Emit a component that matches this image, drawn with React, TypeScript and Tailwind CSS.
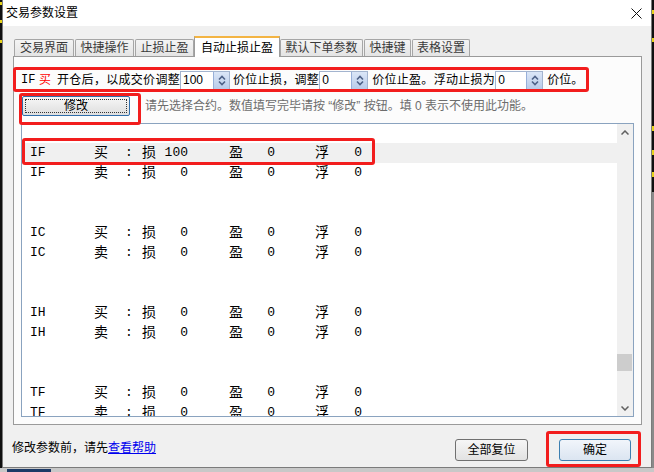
import React from "react";

const UI = "font-['Liberation_Sans','Noto_Sans_CJK_SC',sans-serif]";
const MONO = "font-['Liberation_Mono','Noto_Sans_CJK_SC',monospace]";

function Spin() {
  return (
    <div className="w-[16px] h-full border-l border-[#97afd9] bg-gradient-to-b from-[#dbe6f7] to-[#b8cbea] flex items-center justify-center">
      <svg width="8" height="11" viewBox="0 0 8 11">
        <path d="M1 4.5 L4 1.5 L7 4.5" fill="none" stroke="#4d6187" strokeWidth="1.6" />
        <path d="M1 6.5 L4 9.5 L7 6.5" fill="none" stroke="#4d6187" strokeWidth="1.6" />
      </svg>
    </div>
  );
}

function NumInput({ value, w }: { value: string; w: number }) {
  return (
    <div
      className="h-[19px] bg-white border border-[#a3b4cf] flex items-stretch"
      style={{ width: w }}
    >
      <div className="flex-1 pl-[2px] text-[12px] leading-[17px] text-black">{value}</div>
      <Spin />
    </div>
  );
}

function Tab({ label, w, ml, selected }: { label: string; w: number; ml: number; selected?: boolean }) {
  if (selected) {
    return (
      <div
        className="relative z-10 h-[21px] -mb-[1px] bg-white border border-b-0 border-[#9c9c9c] border-t-[2px] border-t-[#f3b443] flex items-center justify-center text-[12px] text-black"
        style={{ width: w, marginLeft: ml }}
      >
        {label}
      </div>
    );
  }
  return (
    <div
      className="h-[17px] bg-gradient-to-b from-[#f4f4f4] to-[#e4e4e4] border border-b-0 border-[#a6a6a6] rounded-t-[2px] flex items-center justify-center text-[12px] text-[#3a3a3a]"
      style={{ width: w, marginLeft: ml }}
    >
      {label}
    </div>
  );
}

type RowData = { code: string; side: string; loss: string; hl?: boolean } | null;

function ListRow({ r }: { r: RowData }) {
  if (!r) return <div className="h-[20px]" />;
  return (
    <div className={`h-[20px] flex items-center text-black ${r.hl ? "bg-[#f0f0f0]" : ""}`}>
      <span className="w-[72px] pl-[8px] text-[13px]">{r.code}</span>
      <span className="w-[31px] text-[14px]">{r.side}</span>
      <span className="w-[17px] text-[13px]">:</span>
      <span className="w-[14px] text-[14px] leading-none">损</span>
      <span className="w-[32px] text-right text-[13px]">{r.loss}</span>
      <span className="w-[41px]" />
      <span className="w-[14px] text-[14px] leading-none">盈</span>
      <span className="w-[32px] text-right text-[13px]">0</span>
      <span className="w-[40px]" />
      <span className="w-[14px] text-[14px] leading-none">浮</span>
      <span className="w-[33px] text-right text-[13px]">0</span>
    </div>
  );
}

export default function App() {
  const rows: RowData[] = [];
  const codes = ["IF", "IC", "IH", "TF"];
  codes.forEach((c, i) => {
    rows.push({ code: c, side: "买", loss: i === 0 ? "100" : "0", hl: i === 0 });
    rows.push({ code: c, side: "卖", loss: "0" });
    if (i < codes.length - 1) {
      rows.push(null);
      rows.push(null);
    }
  });

  return (
    <div className={`w-[654px] h-[472px] bg-[#101010] overflow-hidden relative ${UI}`}>
      {/* desktop bits */}
      <div className="absolute left-0 top-[2px] w-[2px] h-[3px] bg-[#e6d21a]" />
      <div className="absolute left-0 top-[20px] w-[2px] h-[3px] bg-[#e6d21a]" />
      <div className="absolute left-0 top-[40px] w-[2px] h-[3px] bg-[#e6d21a]" />
      <div className="absolute right-0 top-[10px] w-[2px] h-[4px] bg-[#e6d21a]" />
      <div className="absolute right-0 top-[38px] w-[2px] h-[4px] bg-[#e6d21a]" />
      <div className="absolute right-0 top-[126px] w-[2px] h-[5px] bg-[#e6d21a]" />
      <div className="absolute right-0 top-[150px] w-[2px] h-[5px] bg-[#e6d21a]" />
      <div className="absolute right-0 top-[172px] w-[2px] h-[5px] bg-[#e6d21a]" />
      <div className="absolute right-0 top-[192px] w-[2px] h-[280px] bg-[#8a8a8a]" />
      <div className="absolute left-0 top-[468px] w-[654px] h-[4px] bg-[#c8c8c8]" />
      <div className="absolute left-[7px] top-[469px] w-[44px] h-[3px] bg-[#1d3a66]" />

      {/* dialog window */}
      <div className="absolute left-[2px] top-0 w-[650px] h-[468px] bg-[#f0f0f0] border-x border-b border-[#7b7b7b] flex flex-col">
        {/* title bar */}
        <div className="h-[26px] bg-white flex items-center pl-[3px] pr-[9px] shrink-0">
          <span className="text-[12px] text-black leading-none">交易参数设置</span>
          <svg className="ml-auto" width="11" height="11" viewBox="0 0 11 11">
            <path d="M0.5 0.5 L10.5 10.5 M10.5 0.5 L0.5 10.5" stroke="#111" strokeWidth="1" />
          </svg>
        </div>

        {/* tabs */}
        <div className="pt-[10px] pl-[11px] h-[30px] flex items-end shrink-0">
          <Tab label="交易界面" w={60} ml={0} />
          <Tab label="快捷操作" w={59} ml={1} />
          <Tab label="止损止盈" w={59} ml={1} />
          <Tab label="自动止损止盈" w={86} ml={0} selected />
          <Tab label="默认下单参数" w={83} ml={0} />
          <Tab label="快捷键" w={47} ml={1} />
          <Tab label="表格设置" w={58} ml={1} />
        </div>

        {/* panel */}
        <div className="relative ml-[10px] w-[629px] h-[369px] bg-[#fcfcfc] border border-[#9a9a9a] pt-[13px] px-[7px] shrink-0">
          {/* row 1 */}
          <div className="h-[20px] flex items-center text-[12px] text-black whitespace-nowrap">
            <span className={`w-[18px] ${MONO} text-[12px]`}>IF</span>
            <span className="w-[18px] text-[#ff0000]">买</span>
            <span className="tracking-[0.3px]">开仓后，以成交价调整</span>
            <div className="ml-[0px]"><NumInput value="100" w={50} /></div>
            <span className="ml-[3px] tracking-[0.3px]">价位止损，调整</span>
            <div className="ml-[0px]"><NumInput value="0" w={49} /></div>
            <span className="ml-[4px] tracking-[0.3px]">价位止盈。浮动止损为</span>
            <div className="ml-[0px]"><NumInput value="0" w={48} /></div>
            <span className="ml-[4px]">价位。</span>
          </div>

          {/* row 2 */}
          <div className="mt-[6px] h-[20px] flex items-center whitespace-nowrap">
            <button className="ml-[1px] w-[108px] h-[20px] rounded-[2px] border border-[#2f6eab] bg-gradient-to-b from-[#f7f7f7] to-[#dedede] p-[2px] text-[12px] text-black">
              <div className="w-full h-full border border-dotted border-[#333] flex items-center justify-center leading-none">
                修改
              </div>
            </button>
            <span className="ml-[15px] text-[12px] text-[#6d6d6d]">
              请先选择合约。数值填写完毕请按 “修改” 按钮。填 0 表示不使用此功能。
            </span>
          </div>

          {/* list */}
          <div className={`mt-[7px] h-[294px] bg-white border border-[#8aa3bf] flex overflow-hidden ${MONO}`}>
            <div className="flex-1 pt-[19px] overflow-hidden">
              {rows.map((r, i) => (
                <ListRow key={i} r={r} />
              ))}
            </div>
            <div className="w-[16px] bg-[#f0f0f0] relative">
              <svg className="absolute left-[4px] top-[6px]" width="8" height="5" viewBox="0 0 8 5">
                <path d="M0.5 4.5 L4 1 L7.5 4.5" fill="none" stroke="#606060" strokeWidth="1.5" />
              </svg>
              <div className="absolute left-0 top-[230px] w-[15px] h-[17px] bg-[#cdcdcd]" />
              <svg className="absolute left-[4px] top-[282px]" width="8" height="5" viewBox="0 0 8 5">
                <path d="M0.5 0.5 L4 4 L7.5 0.5" fill="none" stroke="#606060" strokeWidth="1.5" />
              </svg>
            </div>
          </div>

          {/* annotations */}
          <div className="absolute left-[-1px] top-[10px] w-[576px] h-[25px] border-[3px] border-[#f21d1d] rounded-[3px]" />
          <div className="absolute left-[5px] top-[36px] w-[122px] h-[32px] border-[3px] border-[#f21d1d] rounded-[3px]" />
          <div className="absolute left-[8px] top-[81px] w-[353px] h-[27px] border-[3px] border-[#f21d1d] rounded-[3px]" />
        </div>

        {/* footer */}
        <div className="relative flex-1 flex items-start pt-[14px] pl-[9px] pr-[20px]">
          <span className="mt-[2px] text-[12px] leading-[14px] text-black whitespace-nowrap">
            修改参数前，请先<span className="text-[#0000ee] underline">查看帮助</span>
          </span>
          <button className="ml-auto w-[73px] h-[22px] rounded-[3px] border border-[#707070] bg-gradient-to-b from-[#f6f6f6] to-[#e2e2e2] text-[12px] text-black">
            全部复位
          </button>
          <button className="ml-[31px] w-[72px] h-[22px] rounded-[3px] border border-[#3c7fb1] bg-gradient-to-b from-[#f1f5fb] to-[#dbe5f1] text-[12px] text-black">
            确定
          </button>
          <div className="absolute left-[543px] top-[6px] w-[95px] h-[36px] border-[3px] border-[#f21d1d] rounded-[3px]" />
        </div>
      </div>
    </div>
  );
}
